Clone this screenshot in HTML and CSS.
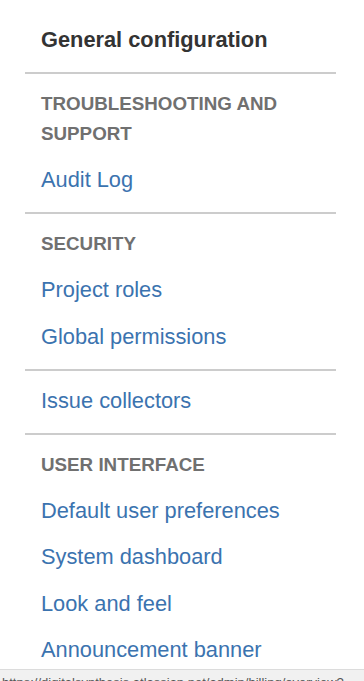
FILE: index.html
```html
<!DOCTYPE html>
<html>
<head>
<meta charset="utf-8">
<link rel="stylesheet" href="styles.css">
</head>
<body>
<nav class="sidebar">
  <h2 class="title">General configuration</h2>
  <section class="group">
    <h3 class="group-head">TROUBLESHOOTING AND SUPPORT</h3>
    <a class="link" href="#">Audit Log</a>
  </section>
  <section class="group">
    <h3 class="group-head">SECURITY</h3>
    <a class="link" href="#">Project roles</a>
    <a class="link" href="#">Global permissions</a>
  </section>
  <section class="group">
    <a class="link" href="#">Issue collectors</a>
  </section>
  <section class="group">
    <h3 class="group-head">USER INTERFACE</h3>
    <a class="link" href="#">Default user preferences</a>
    <a class="link" href="#">System dashboard</a>
    <a class="link" href="#">Look and feel</a>
    <a class="link" href="#">Announcement banner</a>
  </section>
</nav>
<div class="statusbar">https://digitalsynthesis.atlassian.net/admin/billing/overview?</div>
</body>
</html>
```
FILE: styles.css
```css
html, body {
  margin: 0;
  padding: 0;
  background: #ffffff;
  font-family: "Liberation Sans", Arial, sans-serif;
  overflow: hidden;
}

.sidebar {
  width: 311px;
  margin-left: 25px;
}

.title {
  margin: 0;
  padding: 25px 16px 17px;
  font-size: 21.8px;
  line-height: 30px;
  font-weight: bold;
  color: #333333;
}

.group {
  border-top: 2px solid #cccccc;
  padding: 7px 16px 8.5px;
  display: flex;
  flex-direction: column;
}

.group-head {
  margin: 0;
  padding: 8px 0;
  font-size: 18.8px;
  line-height: 30px;
  font-weight: bold;
  color: #707070;
}

.link {
  display: block;
  height: 46.5px;
  line-height: 46.5px;
  font-size: 21.8px;
  color: #3b73af;
  text-decoration: none;
  white-space: nowrap;
}

.statusbar {
  position: fixed;
  left: 0;
  right: 0;
  bottom: 0;
  box-sizing: border-box;
  height: 12px;
  background: #f1f1f1;
  border-top: 1px solid #dcdcdc;
  padding: 5px 0 0 2px;
  font-size: 13px;
  line-height: 16px;
  color: #555555;
  white-space: nowrap;
  overflow: hidden;
}
```
